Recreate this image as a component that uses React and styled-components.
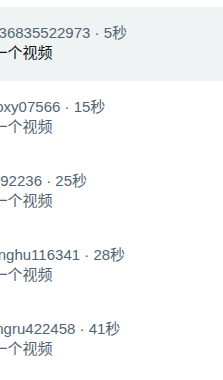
import React from "react";
import styled, { createGlobalStyle } from "styled-components";

const GlobalStyle = createGlobalStyle`
  html, body {
    margin: 0;
    padding: 0;
    background: #ffffff;
  }
  body {
    font-family: "Liberation Sans", "Noto Sans CJK SC", sans-serif;
    -webkit-font-smoothing: antialiased;
  }
`;

// The list is wider than the window; its left side is cut off
const Viewport = styled.div`
  width: 223px;
  height: 380px;
  overflow: hidden;
  padding-top: 7px;
  box-sizing: border-box;
`;

const List = styled.ul`
  list-style: none;
  margin: 0;
  padding: 0;
  display: flex;
  flex-direction: column;
`;

// One conversation row, highlighted when it is the open one
const Row = styled.li`
  display: flex;
  align-items: flex-start;
  padding: 16px 0 18px;
  background: ${(p) => (p.$active ? "#eff3f4" : "#ffffff")};
`;

// Text column sits partly to the left of the visible area
const Body = styled.div`
  display: flex;
  flex-direction: column;
  margin-left: -52.5px;
  min-width: 0;
  white-space: nowrap;
`;

const Meta = styled.div`
  font-size: 15px;
  line-height: 20px;
  color: #536471;
`;

const Preview = styled.div`
  font-size: 15px;
  line-height: 20px;
  color: ${(p) => (p.$active ? "#0f1419" : "#536471")};
`;

const conversations = [
  { handle: "wang36835522973", time: "5秒", active: true },
  { handle: "bluefoxy07566", time: "15秒" },
  { handle: "user092236", time: "25秒" },
  { handle: "zhiyanghu116341", time: "28秒" },
  { handle: "zhuangru422458", time: "41秒" },
];

const App = () => (
  <>
    <GlobalStyle />
    <Viewport>
      <List>
        {conversations.map((c) => (
          <Row key={c.handle} $active={c.active}>
            <Body>
              <Meta>
                @{c.handle} · {c.time}
              </Meta>
              <Preview $active={c.active}>发送了一个视频</Preview>
            </Body>
          </Row>
        ))}
      </List>
    </Viewport>
  </>
);

export default App;
